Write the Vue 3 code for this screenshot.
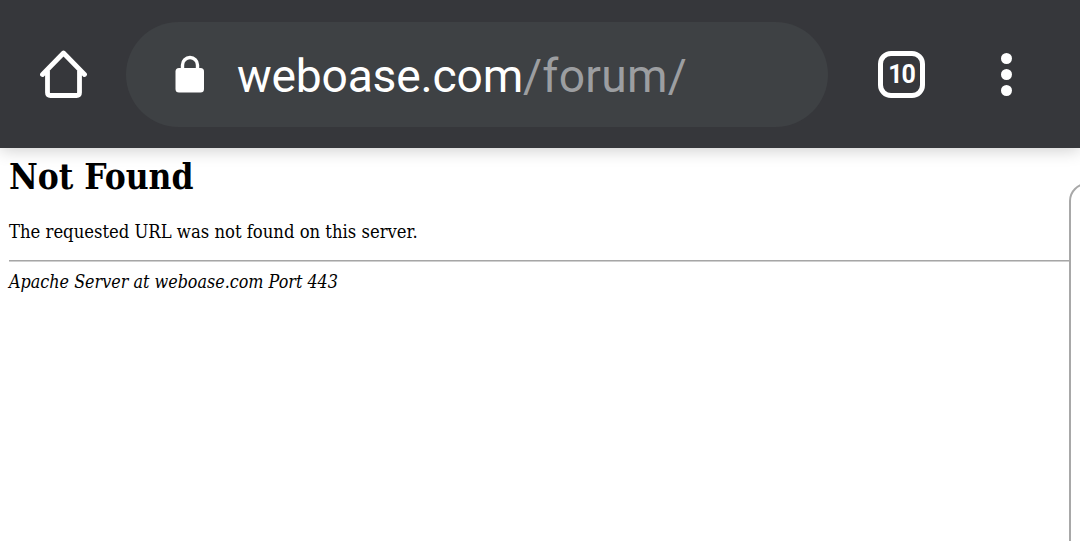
<template>
  <div class="screen">
    <header class="toolbar">
      <svg class="home" width="48" height="48" viewBox="0 0 48 48">
        <path d="M2.5 24.5 L23.5 3 L44.5 24.5 M7.5 21 V42.5 Q7.5 45.5 10.5 45.5 H36.5 Q39.5 45.5 39.5 42.5 V21" fill="none" stroke="#fff" stroke-width="4.8" stroke-linecap="round" stroke-linejoin="round" />
      </svg>
      <div class="omnibox">
        <svg class="lock" width="30" height="38" viewBox="0 0 30 38">
          <path d="M7.5 16 V10 a7.5 7.5 0 0 1 15 0 V16" fill="none" stroke="#fff" stroke-width="3.4" />
          <rect x="0.5" y="13" width="28.5" height="24.5" rx="3.5" fill="#fff" />
        </svg>
        <div class="url"><span class="host">weboase.com</span><span class="path">/forum/</span></div>
      </div>
      <div class="tabs">10</div>
      <div class="menu"><i></i><i></i><i></i></div>
    </header>
    <main class="page">
      <h1>Not Found</h1>
      <p>The requested URL was not found on this server.</p>
      <hr />
      <address>Apache Server at weboase.com Port 443</address>
    </main>
    <div class="edge-panel"></div>
  </div>
</template>

<script setup>
</script>

<style>
html, body {
  margin: 0;
  background: #fff;
}
</style>

<style scoped>
.screen {
  position: relative;
  width: 1080px;
  height: 541px;
  overflow: hidden;
  background: #fff;
}

.toolbar {
  position: relative;
  z-index: 1;
  height: 148px;
  box-sizing: border-box;
  display: flex;
  align-items: center;
  background: #36373b;
  box-shadow: 0 2px 16px rgba(0, 0, 0, 0.2);
  font-family: Roboto, sans-serif;
}

.home {
  margin-left: 40px;
  flex: none;
}

.omnibox {
  margin-left: 38px;
  width: 702px;
  height: 105px;
  border-radius: 53px;
  margin-top: 1px;
  background: #3e4144;
  display: flex;
  align-items: center;
  flex: none;
}

.lock {
  margin-left: 49px;
  margin-top: -2px;
  flex: none;
}

.url {
  margin-left: 32px;
  margin-top: 2px;
  font-size: 46.2px;
  color: #fff;
  white-space: nowrap;
}

.host {
  letter-spacing: -0.2px;
}

.path {
  color: #9c9ea1;
  letter-spacing: 0.3px;
}

.tabs {
  margin-left: 50px;
  width: 47px;
  height: 47px;
  box-sizing: border-box;
  border: 5px solid #fff;
  border-radius: 13px;
  display: flex;
  align-items: center;
  justify-content: center;
  color: #fff;
  font-size: 25px;
  font-weight: 700;
  letter-spacing: -1px;
  flex: none;
}

.menu {
  margin-left: 76px;
  display: flex;
  flex-direction: column;
  gap: 5px;
  flex: none;
}

.menu i {
  display: block;
  width: 11px;
  height: 11px;
  border-radius: 50%;
  background: #fff;
}

.page {
  padding: 0 11px 0 9px;
  color: #000;
  font-family: "DejaVu Serif", serif;
  font-stretch: condensed;
}

h1 {
  margin: 4px 0 0;
  font-size: 35px;
  line-height: 50px;
  font-weight: 700;
}

p {
  margin: 17px 0 0;
  font-size: 18.3px;
  line-height: 26px;
}

hr {
  margin: 15px 0 0;
  height: 0;
  border: none;
  border-top: 1px solid #a6a6a6;
  border-bottom: 1px solid #cfcfcf;
}

address {
  margin-top: 7px;
  font-size: 17.8px;
  line-height: 26px;
  font-style: italic;
}

.edge-panel {
  position: absolute;
  left: 1069px;
  top: 183px;
  width: 40px;
  height: 400px;
  box-sizing: border-box;
  border: 2px solid #a8a8a8;
  border-radius: 18px 0 0 0;
  background: #fff;
}
</style>
